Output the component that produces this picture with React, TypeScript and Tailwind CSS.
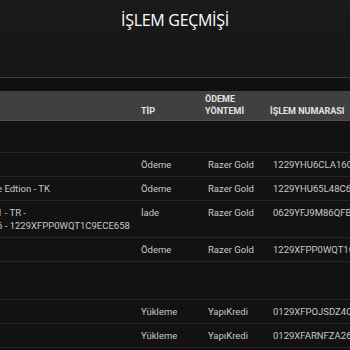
const rows = [
  { kind: "empty", h: "h-[32px]" },
  { desc: [""], tip: "Ödeme", method: "Razer Gold", id: "1229YHU6CLA16C0A7D2" },
  { desc: ["e Edtion - TK"], tip: "Ödeme", method: "Razer Gold", id: "1229YHU65L48C66B91E" },
  {
    desc: ["1 - TR -", "6 - 1229XFPP0WQT1C9ECE658"],
    tip: "İade",
    method: "Razer Gold",
    id: "0629YFJ9M86QFB7C1A3",
  },
  { desc: [""], tip: "Ödeme", method: "Razer Gold", id: "1229XFPP0WQT1C9ECE658" },
  { kind: "empty", h: "h-[38px]" },
  { desc: [""], tip: "Yükleme", method: "YapıKredi", id: "0129XFPOJSDZ40C8E21" },
  { desc: [""], tip: "Yükleme", method: "YapıKredi", id: "0129XFARNFZA26B3D90" },
];

export default function App() {
  return (
    <div className="w-[350px] h-[350px] overflow-hidden bg-[#121212] font-['Roboto',sans-serif]">
      <div className="h-[77px] bg-linear-to-b from-[#1a1a1a] to-[#161616] flex justify-center pt-[9px]">
        <h1 className="font-['Open_Sans',sans-serif] font-medium text-[16px] leading-[22px] text-white tracking-[-0.3px]">
          İŞLEM GEÇMİŞİ
        </h1>
      </div>
      <div className="h-px bg-[#3a3a3a]" />
      <div className="h-[13px] bg-[#101010]" />

      <div className="grid grid-cols-[138px_67px_65px_1fr] h-[30px] bg-[#404040] border-b border-[#4e4e4e] text-[9px] leading-[12px] font-bold text-[#e2e2e2] items-end pb-[3px]">
        <div />
        <div className="pl-[3px]">TİP</div>
        <div>
          ÖDEME
          <br />
          YÖNTEMİ
        </div>
        <div className="whitespace-nowrap">İŞLEM NUMARASI</div>
      </div>

      {rows.map((r, i) =>
        r.kind === "empty" ? (
          <div key={i} className={`${r.h} border-b border-[#262626]`} />
        ) : (
          <div
            key={i}
            className="grid grid-cols-[138px_67px_65px_1fr] border-b border-[#262626] text-[9.5px] leading-[13px] text-[#c8c8c8] pt-[5px] pb-[5px]"
          >
            <div className="-ml-[3px] whitespace-nowrap">
              {r.desc!.map((d, j) => (
                <div key={j}>{d || "\u00a0"}</div>
              ))}
            </div>
            <div className="pl-[3px]">{r.tip}</div>
            <div className="pl-[3px]">{r.method}</div>
            <div className="pl-[3px] whitespace-nowrap">{r.id}</div>
          </div>
        )
      )}
    </div>
  );
}
